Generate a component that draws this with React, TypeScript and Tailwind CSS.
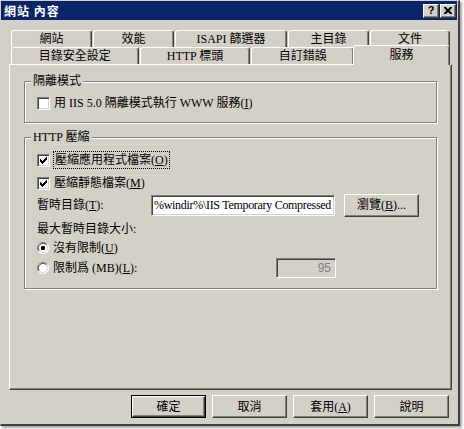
import React from "react";

const raised = "border border-t-white border-l-white border-r-[#404040] border-b-[#404040] shadow-[inset_-1px_-1px_0_#808080]";
const sunken = "border border-t-[#808080] border-l-[#808080] border-r-white border-b-white shadow-[inset_1px_1px_0_#404040,inset_-1px_-1px_0_#d4d0c8]";

const Tab = ({ label, w, selected }: { label: React.ReactNode; w: string; selected?: boolean }) => (
	<div
		className={`${w} flex items-center justify-center border-l border-t border-r border-l-white border-t-white border-r-[#404040] rounded-t-[3px] shadow-[inset_-1px_0_0_#808080] bg-[#d4d0c8] ${
			selected ? "relative z-10 h-[20px] -mb-px -ml-[2px] pb-[2px]" : "h-[17px]"
		}`}
	>
		{label}
	</div>
);

const Checkbox = ({ checked }: { checked?: boolean }) => (
	<div className={`w-[13px] h-[13px] bg-white shrink-0 flex items-center justify-center ${sunken}`}>
		{checked && (
			<svg width="7" height="7" viewBox="0 0 7 7">
				<path d="M0 2h1v1h1v1h1v-1h1v-1h1v-1h1v-1h1v3h-1v1h-1v1h-1v1h-1v1h-1v-1h-1v-1h-1z" fill="black" />
			</svg>
		)}
	</div>
);

const Radio = ({ checked }: { checked?: boolean }) => (
	<svg width="12" height="12" viewBox="0 0 12 12" className="shrink-0">
		<circle cx="6" cy="6" r="5.5" fill="white" />
		<path d="M10.5 2.6A5.5 5.5 0 0 0 1.5 9.4" stroke="#808080" fill="none" />
		<path d="M9.6 3.2A4.5 4.5 0 0 0 2.4 8.8" stroke="#404040" fill="none" />
		<path d="M1.5 9.4A5.5 5.5 0 0 0 10.5 2.6" stroke="white" fill="none" />
		<path d="M2.4 8.8A4.5 4.5 0 0 0 9.6 3.2" stroke="#d4d0c8" fill="none" />
		{checked && <rect x="4" y="4" width="4" height="4" rx="1.2" fill="black" />}
	</svg>
);

const Button = ({ children, isDefault, w = "w-[75px]" }: { children: React.ReactNode; isDefault?: boolean; w?: string }) =>
	isDefault ? (
		<div className={`${w} h-[23px] border border-black flex`}>
			<div className={`flex-1 flex items-center justify-center ${raised}`}>{children}</div>
		</div>
	) : (
		<div className={`${w} h-[23px] flex items-center justify-center ${raised}`}>{children}</div>
	);

const Group = ({ title, className, children }: { title: string; className: string; children: React.ReactNode }) => (
	<div className={`relative border border-[#808080] shadow-[1px_1px_0_white,inset_1px_1px_0_white] ${className}`}>
		<div className="absolute -top-[7px] left-[6px] bg-[#d4d0c8] px-[2px] leading-[13px]">{title}</div>
		{children}
	</div>
);

export default function App() {
	return (
		<div className="w-[464px] h-[429px] bg-white font-['Liberation_Serif','Noto_Sans_CJK_TC',serif] text-[12px] leading-none text-black">
			<div className="w-[460px] h-[426px] bg-[#d4d0c8] border-t border-l border-t-[#d4d0c8] border-l-[#d4d0c8] border-r-2 border-b-2 border-r-[#404040] border-b-[#404040] shadow-[2px_2px_2px_rgba(0,0,0,0.35)] flex flex-col">
				<div className="h-[19px] mr-[1px] bg-[#0a246a] flex items-center pl-[3px] pr-[1px]">
					<span className="text-white font-bold text-[12px] tracking-[1px] font-['Noto_Sans_CJK_TC',sans-serif]">網站 內容</span>
					<div className="ml-auto flex gap-[1px]">
						<div className={`w-[16px] h-[14px] bg-[#d4d0c8] flex items-center justify-center ${raised}`}>
							<span className="font-['Liberation_Sans',sans-serif] font-bold text-[11px]">?</span>
						</div>
						<div className={`w-[16px] h-[14px] bg-[#d4d0c8] flex items-center justify-center ${raised}`}>
							<svg width="8" height="7" viewBox="0 0 8 7">
								<path d="M0 0h2l2 2 2-2h2v1l-2.5 2.5 2.5 2.5v1h-2l-2-2-2 2h-2v-1l2.5-2.5-2.5-2.5z" fill="black" />
							</svg>
						</div>
					</div>
				</div>

				<div className="flex flex-col px-[8px] pt-[10px]">
					<div className="flex ml-[2px] gap-[1px]">
						<Tab label="網站" w="w-[81px]" />
						<Tab label="效能" w="w-[81px]" />
						<Tab label="ISAPI 篩選器" w="w-[112px]" />
						<Tab label="主目錄" w="w-[81px]" />
						<Tab label="文件" w="w-[80px]" />
					</div>
					<div className="flex items-end ml-[2px] gap-[1px] h-[17px]">
						<Tab label="目錄安全設定" w="w-[128px]" />
						<Tab label="HTTP 標頭" w="w-[111px]" />
						<Tab label="自訂錯誤" w="w-[103px]" />
						<Tab label="服務" w="w-[97px]" selected />
					</div>

					<div className={`h-[326px] w-[443px] pl-[14px] pt-[16px] ${raised}`}>
						<Group title="隔離模式" className="w-[413px] h-[42px] flex items-center pl-[12px]">
							<div className="flex items-center gap-[4px] mt-[2px]">
								<Checkbox />
								<span>
									用 IIS 5.0 隔離模式執行 WWW 服務(<u>I</u>)
								</span>
							</div>
						</Group>

						<Group title="HTTP 壓縮" className="w-[413px] h-[152px] mt-[14px] pl-[12px] pt-[13px] flex flex-col">
							<div className="h-[18px] flex items-center gap-[4px]">
								<Checkbox checked />
								<span className="outline outline-1 outline-dotted outline-black px-[1px] py-[2px]">
									壓縮應用程式檔案(<u>O</u>)
								</span>
							</div>
							<div className="h-[18px] mt-[5px] flex items-center gap-[4px]">
								<Checkbox checked />
								<span>
									壓縮靜態檔案(<u>M</u>)
								</span>
							</div>
							<div className="h-[22px] mt-[2px] flex items-center">
								<span className="w-[114px]">
									暫時目錄(<u>T</u>):
								</span>
								<div className={`w-[184px] h-[21px] bg-white flex items-center pl-[2px] overflow-hidden whitespace-nowrap text-[12px] tracking-[-0.3px] ${sunken}`}>
									%windir%\IIS Temporary Compressed
								</div>
								<div className="ml-[9px]">
									<Button>
										瀏覽(<u>B</u>)...
									</Button>
								</div>
							</div>
							<div className="h-[16px] mt-[5px] flex items-center">最大暫時目錄大小:</div>
							<div className="h-[18px] mt-[2px] flex items-center gap-[4px]">
								<Radio checked />
								<span>
									沒有限制(<u>U</u>)
								</span>
							</div>
							<div className="h-[20px] mt-[1px] flex items-center">
								<div className="w-[239px] flex items-center gap-[4px]">
									<Radio />
									<span>
										限制爲 (MB)(<u>L</u>):
									</span>
								</div>
								<div className={`w-[60px] h-[20px] flex items-center justify-end pr-[4px] text-[#808080] font-['Liberation_Sans',sans-serif] ${sunken}`}>
									95
								</div>
							</div>
						</Group>
					</div>

					<div className="flex justify-end gap-[6px] mt-[5px] pr-[1px]">
						<Button isDefault>確定</Button>
						<Button>取消</Button>
						<Button>
							套用(<u>A</u>)
						</Button>
						<Button>說明</Button>
					</div>
				</div>
			</div>
		</div>
	);
}
